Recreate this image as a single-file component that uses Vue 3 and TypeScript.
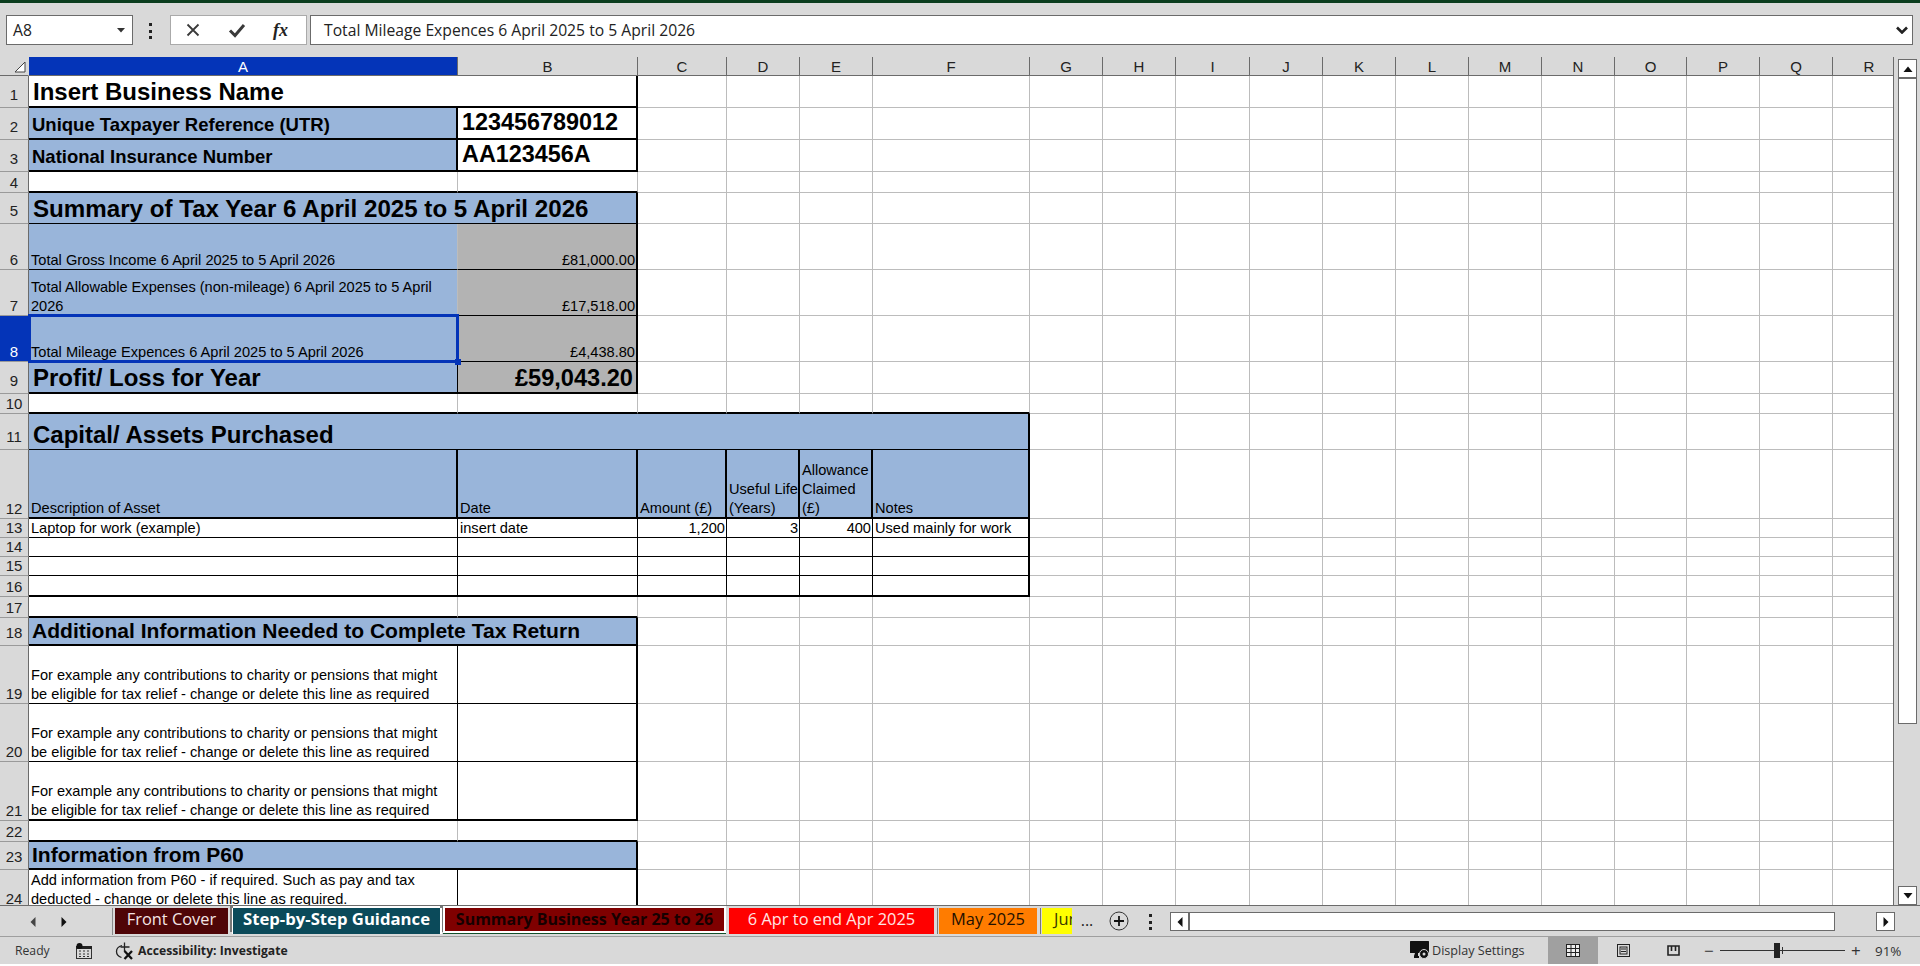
<template>
  <div class="app">
    <div class="topline"></div>

    <!-- Formula bar -->
    <div class="formula-bar">
      <div class="name-box">
        <span>A8</span>
        <svg width="10" height="6" viewBox="0 0 10 6"><path d="M1 1h8L5 5.500z" fill="#333" /></svg>
      </div>
      <div class="dots"><i></i><i></i><i></i></div>
      <div class="fx-box">
        <svg width="16" height="16" viewBox="0 0 16 16"><path d="M2.500 2.500l11 11M13.500 2.500l-11 11" stroke="#3a3a3a" stroke-width="1.800" fill="none" /></svg>
        <svg width="18" height="16" viewBox="0 0 18 16"><path d="M2 8.500l5 5L16 3" stroke="#3a3a3a" stroke-width="3" fill="none" /></svg>
        <span class="fx">fx</span>
      </div>
      <div class="formula-input">
        <span>Total Mileage Expences 6 April 2025 to 5 April 2026</span>
        <svg width="12" height="8" viewBox="0 0 12 8"><path d="M1 1.500l5 5 5-5" stroke="#222" stroke-width="2.600" fill="none" /></svg>
      </div>
    </div>

    <!-- Sheet -->
    <div class="work-area">
      <div class="sheet">
        <div class="grid" :style="{ gridTemplateRows: rowTemplate }">
          <div class="corner">
            <svg width="12" height="12" viewBox="0 0 12 12"><path d="M11 1v10H1z" fill="#fff" stroke="#444" /></svg>
          </div>
          <div v-for="c in cols" :key="c" class="col-head" :class="{ active: c === 'A' }">{{ c }}</div>
          <div
            v-for="cell in cells"
            :key="cell.key"
            :class="cell.cls"
            :style="cell.span > 1 ? { gridColumn: `span ${cell.span}` } : undefined"
          ><span>{{ cell.text }}</span></div>
        </div>
      </div>
      <div class="vscroll">
        <button class="sb-btn">
          <svg width="10" height="6" viewBox="0 0 10 6"><path d="M0.500 6L5 0.500 9.500 6z" fill="#111" /></svg>
        </button>
        <div class="vthumb"></div>
        <button class="sb-btn">
          <svg width="10" height="6" viewBox="0 0 10 6"><path d="M0.500 0L5 5.500 9.500 0z" fill="#111" /></svg>
        </button>
      </div>
    </div>

    <!-- Sheet tabs -->
    <div class="tab-bar">
      <div class="tab-nav">
        <svg width="6" height="10" viewBox="0 0 6 10"><path d="M5.500 0L0.500 5l5 5z" fill="#444" /></svg>
        <svg width="6" height="10" viewBox="0 0 6 10"><path d="M0.500 0l5 5-5 5z" fill="#111" /></svg>
      </div>
      <div class="tabs">
        <div
          v-for="tab in tabs"
          :key="tab.name"
          class="tab"
          :class="tab.cls"
          :style="{ width: tab.width + 'px' }"
        >{{ tab.name }}</div>
      </div>
      <span class="more">...</span>
      <svg class="add-sheet" width="20" height="20" viewBox="0 0 20 20">
        <circle cx="10" cy="10" r="9" fill="none" stroke="#333" />
        <path d="M10 5v10M5 10h10" stroke="#111" stroke-width="1.800" />
      </svg>
      <div class="dots tab-dots"><i></i><i></i><i></i></div>
      <div class="hscroll">
        <button class="sb-btn h">
          <svg width="6" height="10" viewBox="0 0 6 10"><path d="M5.500 0L0.500 5l5 5z" fill="#111" /></svg>
        </button>
        <div class="hthumb"></div>
        <button class="sb-btn h end">
          <svg width="6" height="10" viewBox="0 0 6 10"><path d="M0.500 0l5 5-5 5z" fill="#111" /></svg>
        </button>
      </div>
    </div>

    <!-- Status bar -->
    <div class="status-bar">
      <span class="ready">Ready</span>
      <svg class="macro" width="16" height="16" viewBox="0 0 16 16">
        <rect x="0.500" y="3.500" width="15" height="12" fill="none" stroke="#333" />
        <rect x="0" y="3" width="16" height="3" fill="#222" />
        <circle cx="3.500" cy="3" r="3" fill="#111" />
        <path d="M3 8h2M7 8h2M11 8h2M3 11h2M7 11h2M11 11h2M3 13.500h2M7 13.500h2M11 13.500h2" stroke="#333" />
      </svg>
      <svg class="a11y" width="21" height="18" viewBox="0 0 21 18">
        <path d="M7 3.500C3.500 4.500 1.500 7 1.500 9.500s2 5 5 6" fill="none" stroke="#222" stroke-width="1.300" />
        <path d="M9.500 0.500v9M5.500 5h9" stroke="#222" stroke-width="1.300" fill="none" />
        <path d="M9.500 9l7.500 8M17 9l-7.500 8" stroke="#111" stroke-width="2.300" fill="none" />
      </svg>
      <span class="a11y-text">Accessibility: Investigate</span>

      <div class="status-right">
        <svg class="display" width="20" height="19" viewBox="0 0 20 19">
          <rect x="0" y="0" width="19" height="12" rx="0.500" fill="#111" />
          <path d="M5 12h3v3H4z" fill="#111" />
          <rect x="4" y="15" width="5" height="2" fill="#111" />
          <circle cx="14" cy="13" r="4.500" fill="#111" stroke="#d9d9d9" />
          <circle cx="14" cy="13" r="1.500" fill="#d9d9d9" />
        </svg>
        <span class="display-text">Display Settings</span>
        <div class="view active">
          <svg width="14" height="13" viewBox="0 0 14 13">
            <rect x="0.500" y="0.500" width="13" height="12" fill="#eee" stroke="#222" />
            <path d="M0 4.500h14M0 8.500h14M5 0v13M9.500 0v13" stroke="#222" />
          </svg>
        </div>
        <div class="view">
          <svg width="13" height="13" viewBox="0 0 13 13">
            <rect x="0.500" y="0.500" width="12" height="12" fill="none" stroke="#222" />
            <rect x="3" y="3" width="7" height="7" fill="none" stroke="#222" />
            <path d="M4 5h5M4 7.500h5" stroke="#222" />
          </svg>
        </div>
        <div class="view">
          <svg width="13" height="11" viewBox="0 0 13 11">
            <path d="M1 1h11v9H1z" fill="none" stroke="#222" stroke-width="1.600" />
            <path d="M4.500 1v5M8.500 1v5" stroke="#222" stroke-width="1.600" />
          </svg>
        </div>
        <div class="zoom">
          <span class="zoom-sign">−</span>
          <div class="slider"><i class="tick"></i><i class="thumb"></i></div>
          <span class="zoom-sign plus">+</span>
          <span class="zoom-value">91%</span>
        </div>
      </div>
    </div>
  </div>
</template>

<script setup lang="ts">
import { computed } from 'vue'

interface CellDef {
  t?: string
  s?: number
  c?: string
}

interface RowDef {
  h: number
  big?: boolean
  cells?: Record<string, CellDef>
}

const cols = 'ABCDEFGHIJKLMNOPQR'.split('')

const forExample = 'For example any contributions to charity or pensions that might\nbe eligible for tax relief - change or delete this line as required'

const rows: RowDef[] = [
  { h: 32, big: true, cells: { A: { t: 'Insert Business Name', s: 2, c: 'title b2 r2' } } },
  {
    h: 32,
    big: true,
    cells: {
      A: { t: 'Unique Taxpayer Reference (UTR)', c: 'blue label b2 r2' },
      B: { t: '123456789012', c: 'value b2 r2' }
    }
  },
  {
    h: 32,
    big: true,
    cells: {
      A: { t: 'National Insurance Number', c: 'blue label b2 r2' },
      B: { t: 'AA123456A', c: 'value b2 r2' }
    }
  },
  { h: 21, cells: { A: { c: 'b2' }, B: { c: 'b2' } } },
  { h: 31, big: true, cells: { A: { t: 'Summary of Tax Year 6 April 2025 to 5 April 2026', s: 2, c: 'blue title wide b1 r2' } } },
  {
    h: 46,
    cells: {
      A: { t: 'Total Gross Income 6 April 2025 to 5 April 2026', c: 'blue b1' },
      B: { t: '£81,000.00', c: 'grey num b1 r2' }
    }
  },
  {
    h: 46,
    cells: {
      A: { t: 'Total Allowable Expenses (non-mileage) 6 April 2025 to 5 April\n2026', c: 'blue b1' },
      B: { t: '£17,518.00', c: 'grey num b1 r2' }
    }
  },
  {
    h: 46,
    cells: {
      A: { t: 'Total Mileage Expences 6 April 2025 to 5 April 2026', c: 'blue selected b1' },
      B: { t: '£4,438.80', c: 'grey num b1 r2' }
    }
  },
  {
    h: 32,
    big: true,
    cells: {
      A: { t: 'Profit/ Loss for Year', c: 'blue title b2 r1' },
      B: { t: '£59,043.20', c: 'grey title num total b2 r2' }
    }
  },
  { h: 20, cells: { A: { c: 'b2' }, B: { c: 'b2' }, C: { c: 'b2' }, D: { c: 'b2' }, E: { c: 'b2' }, F: { c: 'b2' } } },
  { h: 36, big: true, cells: { A: { t: 'Capital/ Assets Purchased', s: 6, c: 'blue title b1 r2' } } },
  {
    h: 69,
    cells: {
      A: { t: 'Description of Asset', c: 'blue b2 r2' },
      B: { t: 'Date', c: 'blue b2 r2' },
      C: { t: 'Amount (£)', c: 'blue b2 r2' },
      D: { t: 'Useful Life\n(Years)', c: 'blue b2 r2' },
      E: { t: 'Allowance\nClaimed\n(£)', c: 'blue b2 r2' },
      F: { t: 'Notes', c: 'blue b2 r2' }
    }
  },
  {
    h: 19,
    cells: {
      A: { t: 'Laptop for work (example)', c: 'b1 r1' },
      B: { t: 'insert date', c: 'b1 r1' },
      C: { t: '1,200', c: 'num b1 r1' },
      D: { t: '3', c: 'num b1 r1' },
      E: { t: '400', c: 'num b1 r1' },
      F: { t: 'Used mainly for work', c: 'b1 r2' }
    }
  },
  { h: 19, cells: { A: { c: 'b1 r1' }, B: { c: 'b1 r1' }, C: { c: 'b1 r1' }, D: { c: 'b1 r1' }, E: { c: 'b1 r1' }, F: { c: 'b1 r2' } } },
  { h: 19, cells: { A: { c: 'b1 r1' }, B: { c: 'b1 r1' }, C: { c: 'b1 r1' }, D: { c: 'b1 r1' }, E: { c: 'b1 r1' }, F: { c: 'b1 r2' } } },
  { h: 21, cells: { A: { c: 'b2 r1' }, B: { c: 'b2 r1' }, C: { c: 'b2 r1' }, D: { c: 'b2 r1' }, E: { c: 'b2 r1' }, F: { c: 'b2 r2' } } },
  { h: 21, cells: { A: { c: 'b2' }, B: { c: 'b2' } } },
  { h: 28, big: true, cells: { A: { t: 'Additional Information Needed to Complete Tax Return', s: 2, c: 'blue heading b2 r2' } } },
  { h: 58, cells: { A: { t: forExample, c: 'b1 r1' }, B: { c: 'b1 r2' } } },
  { h: 58, cells: { A: { t: forExample, c: 'b1 r1' }, B: { c: 'b1 r2' } } },
  { h: 59, cells: { A: { t: forExample, c: 'b2 r1' }, B: { c: 'b2 r2' } } },
  { h: 21, cells: { A: { c: 'b2' }, B: { c: 'b2' } } },
  { h: 28, big: true, cells: { A: { t: 'Information from P60', s: 2, c: 'blue heading b2 r2' } } },
  {
    h: 39,
    cells: {
      A: { t: 'Add information from P60 - if required. Such as pay and tax\ndeducted - change or delete this line as required.', c: 'r1' },
      B: { c: 'r2' }
    }
  }
]

const tabs = [
  { name: 'Front Cover', width: 113, cls: 'front' },
  { name: 'Step-by-Step Guidance', width: 207, cls: 'guidance' },
  { name: 'Summary Business Year 25 to 26', width: 279, cls: 'summary' },
  { name: '6 Apr to end Apr 2025', width: 205, cls: 'april' },
  { name: 'May 2025', width: 98, cls: 'may' },
  { name: 'June 2025', width: 30, cls: 'june' }
]

const rowTemplate = computed(() => ['19px', ...rows.map((r) => r.h + 'px')].join(' '))

const cells = computed(() => {
  const out: { key: string; cls: string; text: string; span: number }[] = []
  rows.forEach((row, r) => {
    const n = r + 1
    const head = ['row-head', n === 8 ? 'active' : '', row.big ? 'big' : ''].join(' ')
    out.push({ key: `h${n}`, cls: head, text: String(n), span: 1 })
    for (let i = 0; i < cols.length; i++) {
      const def = row.cells?.[cols[i]]
      const span = def?.s ?? 1
      out.push({ key: `${cols[i]}${n}`, cls: `cell ${def?.c ?? ''}`, text: def?.t ?? '', span })
      i += span - 1
    }
  })
  return out
})
</script>

<style>
html,
body {
  margin: 0;
  background: #fff;
  overflow: hidden;
}
</style>

<style scoped>
.app {
  width: 1920px;
  height: 964px;
  background: #d9d9d9;
  display: flex;
  flex-direction: column;
  font-family: 'Open Sans', 'Liberation Sans', sans-serif;
  color: #222;
}

.topline {
  height: 3px;
  background: #0b3d1e;
}

/* Formula bar */
.formula-bar {
  height: 54px;
  flex: none;
  box-sizing: border-box;
  padding: 12px 7px 0 6px;
  display: flex;
  align-items: flex-start;
}

.name-box,
.fx-box,
.formula-input {
  height: 30px;
  box-sizing: border-box;
  background: #fff;
  border: 1px solid #6b6b6b;
  display: flex;
  align-items: center;
}

.name-box {
  width: 127px;
  padding: 0 6px;
  justify-content: space-between;
  font-size: 15.7px;
}

.dots {
  display: flex;
  flex-direction: column;
  gap: 3.500px;
}

.dots i {
  display: block;
  width: 3px;
  height: 3px;
  background: #222;
}

.formula-bar .dots {
  width: 37px;
  margin-top: 8px;
  padding-left: 16px;
  box-sizing: border-box;
}

.fx-box {
  width: 137px;
  border-color: #aaa;
  padding-left: 14px;
  gap: 27px;
}

.fx {
  font: italic bold 18px 'Liberation Serif', serif;
}

.formula-input {
  flex: 1;
  margin-left: 3px;
  padding: 0 4px 0 13px;
  justify-content: space-between;
  font-size: 15.7px;
}

/* Sheet */
.work-area {
  height: 848px;
  flex: none;
  display: flex;
}

.sheet {
  width: 1894px;
  height: 848px;
  box-sizing: border-box;
  overflow: hidden;
  border-right: 1px solid #6b6b6b;
  background: #fff;
}

.grid {
  display: grid;
  grid-template-columns: 29px 429px 180px 89px 73px 73px 157px 73px 73px 74px 73px 73px 73px 73px 73px 72px 73px 73px 73px;
}

.corner {
  background: #d9d9d9;
  border-bottom: 1px solid #6b6b6b;
  border-right: 1px solid #d9d9d9;
  box-sizing: border-box;
  display: flex;
  justify-content: flex-end;
  align-items: flex-end;
  padding: 0 2px 2px 0;
}

.col-head,
.row-head {
  background: #d9d9d9;
  box-sizing: border-box;
  font: 15px 'Liberation Sans', Arial, sans-serif;
  color: #222;
}

.col-head {
  border-right: 1px solid #6b6b6b;
  border-bottom: 1px solid #6b6b6b;
  line-height: 19px;
  text-align: center;
}

.row-head {
  border-right: 1px solid #6b6b6b;
  border-bottom: 1px solid #9a9a9a;
  display: flex;
  align-items: flex-end;
  justify-content: center;
  line-height: 19px;
}

.row-head.big {
  padding-bottom: 3px;
}

.col-head.active,
.row-head.active {
  background: #0434b8;
  color: #fff;
}

.cell {
  position: relative;
  box-sizing: border-box;
  min-width: 0;
  overflow: hidden;
  display: flex;
  align-items: flex-end;
  padding: 0 0 0 2px;
  border-right: 1px solid #bcbcbc;
  border-bottom: 1px solid #bcbcbc;
  background: #fff;
  font: 14.6px/19px 'Liberation Sans', Arial, sans-serif;
  color: #000;
  white-space: pre;
}

.cell span {
  margin-bottom: -1px;
}

.blue { background: #99b5da; }
.grey { background: #b3b3b3; }
.num { justify-content: flex-end; text-align: right; padding-right: 1px; }
.r1 { border-right-color: #000; }
.r2 { border-right: 2px solid #000; }
.b1 { border-bottom-color: #000; }
.b2 { border-bottom: 2px solid #000; }

.title {
  font-size: 24px;
  line-height: 28px;
  font-weight: 700;
  padding-left: 4px;
}

.title.wide {
  font-size: 24.15px;
}

.title.total {
  padding-right: 3px;
  font-size: 23.6px;
}

.label {
  font-size: 18.5px;
  line-height: 26px;
  font-weight: 700;
  padding-left: 3px;
}

.value {
  font-size: 23.4px;
  line-height: 28px;
  font-weight: 700;
  padding-left: 4px;
  padding-bottom: 2px;
}

.heading {
  font-size: 21.05px;
  line-height: 26px;
  font-weight: 700;
  padding-left: 3px;
}

.title span,
.label span,
.value span,
.heading span {
  margin-bottom: 0;
}

.selected {
  overflow: visible;
  z-index: 2;
}

.selected::after {
  content: '';
  position: absolute;
  inset: -2px -2px -2px -1px;
  border: 3px solid #0434b8;
  pointer-events: none;
}

.selected::before {
  content: '';
  position: absolute;
  right: -4px;
  bottom: -4px;
  width: 6px;
  height: 6px;
  background: #0434b8;
  z-index: 1;
}

/* Scrollbars */
.vscroll {
  width: 19px;
  margin: 2px 0 0 4px;
  display: flex;
  flex-direction: column;
  height: 846px;
}

.sb-btn {
  padding: 0;
  width: 19px;
  height: 19px;
  flex: none;
  background: #fff;
  border: 1px solid #6b6b6b;
  display: flex;
  align-items: center;
  justify-content: center;
  box-sizing: border-box;
}

.vthumb {
  height: 646px;
  box-sizing: border-box;
  background: #fff;
  border: 1px solid #6b6b6b;
  margin-bottom: auto;
}

/* Tabs */
.tab-bar {
  height: 32px;
  flex: none;
  box-sizing: border-box;
  border-top: 1px solid #6b6b6b;
  border-bottom: 1px solid #9f9f9f;
  display: flex;
  align-items: flex-start;
}

.tab-nav {
  width: 113px;
  height: 27px;
  margin-top: 2px;
  box-sizing: border-box;
  padding: 9px 45px 0 30px;
  display: flex;
  justify-content: space-between;
  border-right: 1px solid #8a8a8a;
}

.tabs {
  display: flex;
  gap: 5px;
  margin-left: 2px;
  margin-top: 2px;
}

.tab {
  position: relative;
  height: 26px;
  line-height: 22px;
  font-size: 16.4px;
  text-align: center;
  white-space: nowrap;
  overflow: hidden;
}

.front { background: #4f0507; color: #f4e4e4; }

.guidance {
  background: #0b4a5a;
  color: #fff;
  font-weight: 700;
  font-size: 16.7px;
  box-shadow: 0 -2px 0 #fff, -1px 0 0 #fff, 2px 0 0 #fff, 3px -2px 0 #777, -3px -2px 0 #777;
}

.summary {
  height: 23px;
  background: #7f0000;
  color: #160000;
  font-weight: 700;
  font-size: 16px;
  overflow: hidden;
  box-shadow: 0 0 0 2px #fff, 0 1px 0 2px #12502b;
}

.april { background: #ff0000; color: #ffe4e4; box-shadow: 3px 0 0 #d9d9d9, 4px 0 0 #777; }
.may { background: #ff7c00; color: #241000; box-shadow: 3px 0 0 #d9d9d9, 4px 0 0 #777; }
.june { background: #ffff00; color: #3a3a00; text-align: left; padding-left: 12px; box-sizing: border-box; }

.more {
  width: 30px;
  margin-top: 3px;
  font-size: 16px;
  text-align: center;
}

.add-sheet {
  margin: 5px 0 0 7px;
}

.tab-dots {
  margin: 8px 0 0 20px;
}

.hscroll {
  display: flex;
  margin: 6px 0 0 18px;
  width: 725px;
}

.sb-btn.h {
  height: 19px;
}

.sb-btn.h.end {
  margin-left: auto;
}

.hthumb {
  width: 646px;
  height: 19px;
  box-sizing: border-box;
  background: #fff;
  border: 1px solid #6b6b6b;
}

/* Status bar */
.status-bar {
  flex: 1;
  display: flex;
  align-items: center;
  font-size: 12.2px;
  color: #333;
  padding-left: 15px;
}

.ready {
  width: 61px;
}

.macro {
  margin-right: 23px;
}

.a11y {
  margin-right: 2px;
}

.a11y-text {
  font-weight: 700;
  color: #222;
}

.status-right {
  margin-left: auto;
  display: flex;
  align-items: center;
  height: 100%;
}

.display {
  margin-right: 2px;
}

.display-text {
  width: 116px;
  font-size: 12.6px;
}

.view {
  width: 50px;
  height: 100%;
  display: flex;
  align-items: center;
  justify-content: center;
}

.view.active {
  background: #a0a0a0;
}

.zoom {
  display: flex;
  align-items: center;
  margin-left: 6px;
  width: 216px;
  box-sizing: border-box;
}

.zoom-sign {
  font-size: 17px;
  width: 16px;
  line-height: 1;
}

.slider {
  position: relative;
  width: 125px;
  height: 1px;
  background: #333;
}

.slider .tick {
  position: absolute;
  left: 62px;
  top: -3px;
  width: 1px;
  height: 7px;
  background: #333;
}

.slider .thumb {
  position: absolute;
  left: 54px;
  top: -7px;
  width: 6px;
  height: 15px;
  background: #222;
}

.plus {
  margin-left: 6px;
}

.zoom-value {
  margin-left: 8px;
  font-size: 13.4px;
}
</style>
